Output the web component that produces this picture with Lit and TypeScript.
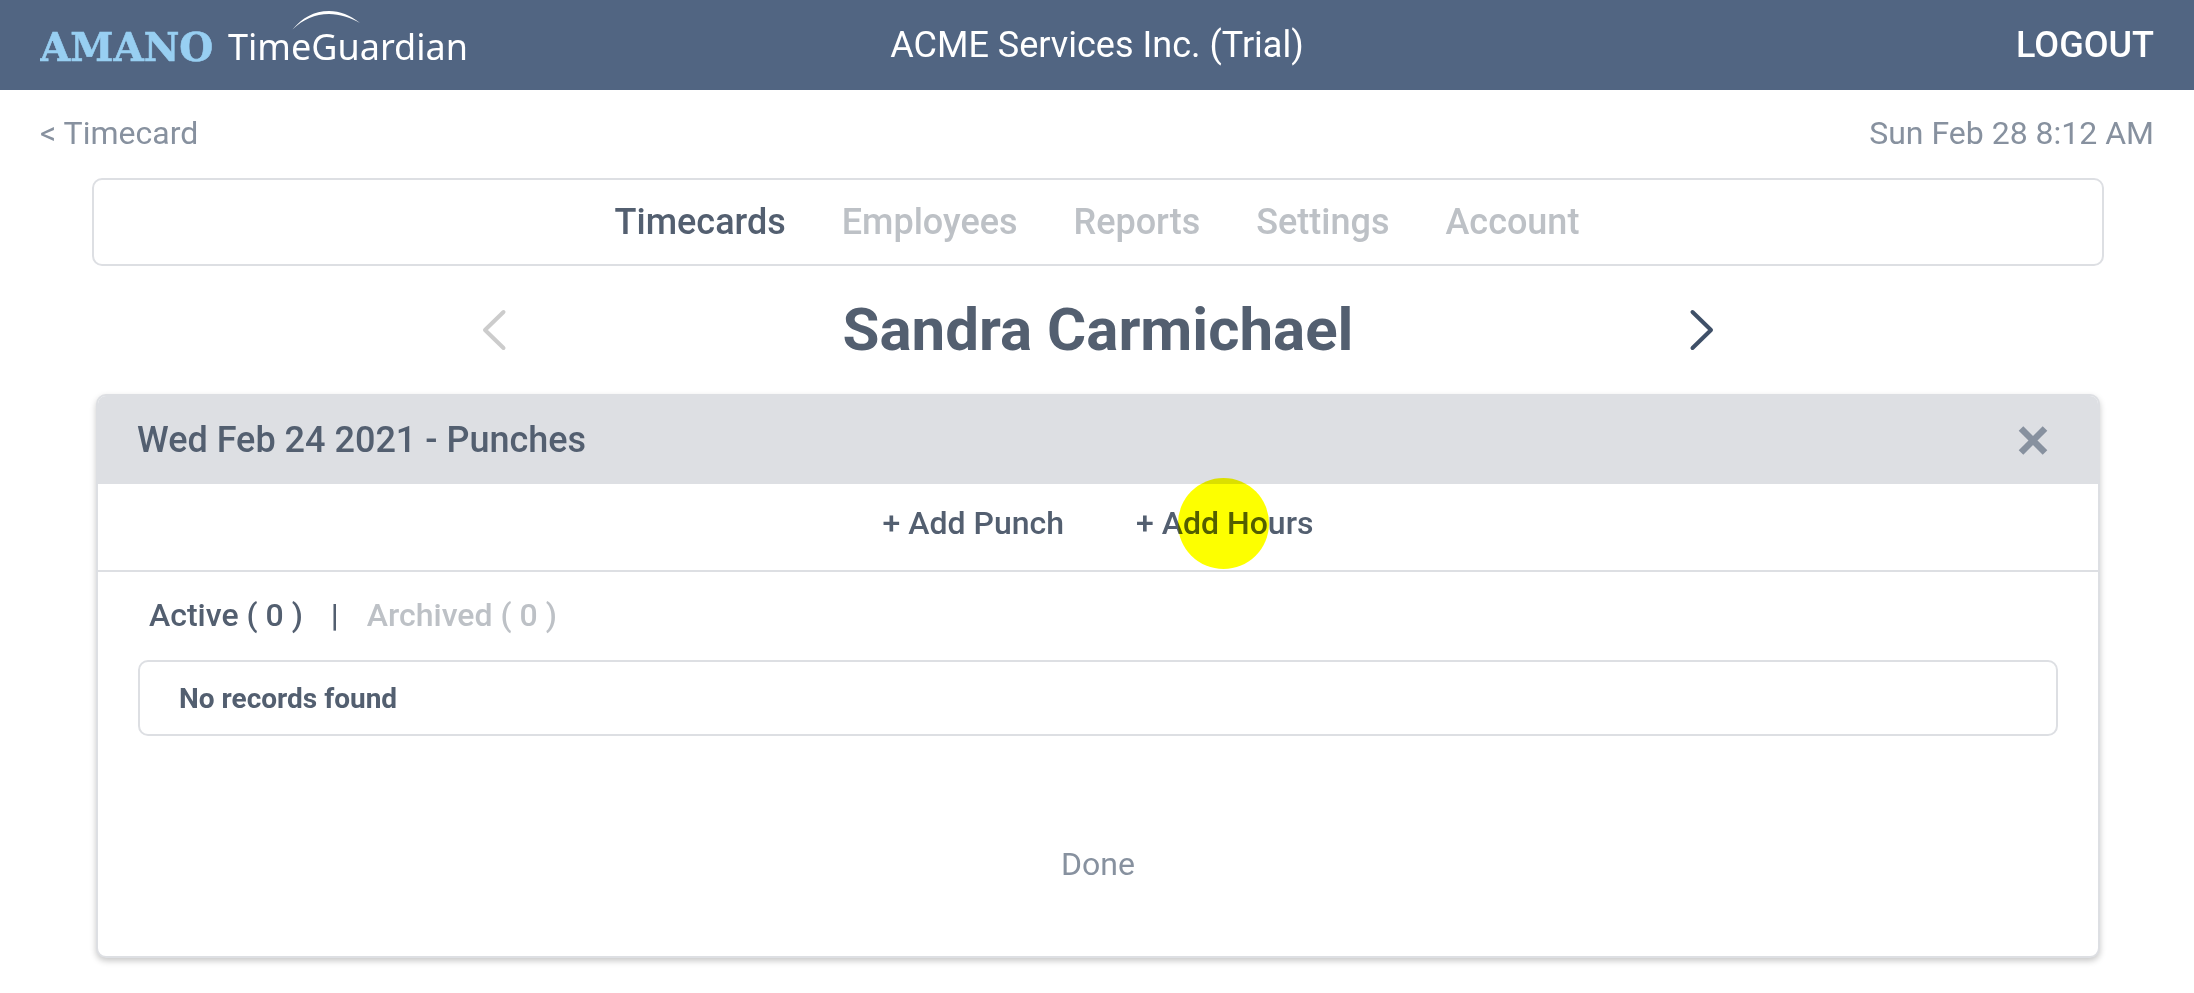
import { LitElement, html, css } from "lit";
import { customElement, property, state } from "lit/decorators.js";
import { classMap } from "lit/directives/class-map.js";

@customElement("brand-logo")
class BrandLogo extends LitElement {
  static styles = css`
    :host {
      display: block;
    }
    .logo {
      display: block;
      width: 440px;
      height: 90px;
    }
    .maker {
      font: bold 39px "DejaVu Serif", serif;
      fill: #98cff2;
      stroke: #98cff2;
      stroke-width: 0.6;
    }
    .product {
      font: 36px "Noto Sans", sans-serif;
      fill: #fff;
    }
    .arc {
      fill: #fff;
    }
  `;

  render() {
    return html`
      <svg class="logo" viewBox="0 0 440 90" role="img" aria-label="Amano TimeGuardian">
        <text class="maker" x="0" y="61">AMANO</text>
        <text class="product" x="188" y="60">TimeGuardian</text>
        <path
          class="arc"
          d="M252.500 29.500C262 18 274 11 289 11C300 11 310 15 320 23C310 17.500 300 14 289 14C275 14 263 19.500 252.500 29.500Z"
        />
      </svg>
    `;
  }
}

@customElement("punch-card")
class PunchCard extends LitElement {
  @property() heading = "";
  @state() private tab = "active";

  static styles = css`
    :host {
      display: block;
      box-sizing: border-box;
      border: 2px solid #dddfe3;
      border-radius: 10px;
      box-shadow: 0 3px 6px rgba(0, 0, 0, 0.22);
      background: #fff;
      color: #535f70;
    }
    button {
      padding: 0;
      border: 0;
      background: none;
      color: inherit;
      font: inherit;
      cursor: pointer;
    }
    .head {
      display: flex;
      align-items: center;
      justify-content: space-between;
      height: 88px;
      padding: 0 49px 0 39px;
      background: #dddfe3;
      border-radius: 8px 8px 0 0;
    }
    .title {
      margin: 0;
      font-size: 36px;
      font-weight: 500;
    }
    .close,
    .cross {
      display: block;
    }
    .actions {
      display: flex;
      justify-content: center;
      gap: 72px;
      padding-bottom: 8px;
      border-bottom: 2px solid #dddfe3;
      font-size: 32px;
      font-weight: 500;
      line-height: 78px;
    }
    .spot {
      position: relative;
    }
    .spot::after {
      content: "";
      position: absolute;
      left: 42px;
      top: -6px;
      width: 91px;
      height: 91px;
      border-radius: 50%;
      background: #fdff00;
      mix-blend-mode: multiply;
      pointer-events: none;
    }
    .tabs {
      display: flex;
      gap: 28px;
      padding: 0 51px 2px;
      font-size: 32px;
      font-weight: 500;
      line-height: 86px;
    }
    .tab {
      color: #bdc1c6;
    }
    .tab.on {
      color: inherit;
    }
    .records {
      margin: 0 40px;
      padding: 2px 39px 0;
      border: 2px solid #dddfe3;
      border-radius: 10px;
      font-size: 28px;
      font-weight: 700;
      line-height: 70px;
    }
    .foot {
      display: flex;
      justify-content: center;
      padding: 108px 0 72px;
      color: #87919f;
      font-size: 32px;
      line-height: 40px;
    }
  `;

  private renderTab(id: string, label: string) {
    return html`<button
      class=${classMap({ tab: true, on: this.tab === id })}
      @click=${() => (this.tab = id)}
    >${label} ( 0 )</button>`;
  }

  render() {
    return html`
      <header class="head">
        <h2 class="title">${this.heading}</h2>
        <button class="close" aria-label="Close">
          <svg class="cross" width="32" height="32" viewBox="0 0 32 32">
            <path d="M4 4.500L28 28.500M28 4.500L4 28.500" stroke="#87919f" stroke-width="6.500" />
          </svg>
        </button>
      </header>
      <div class="actions">
        <button>+ Add Punch</button>
        <button class="spot">+ Add Hours</button>
      </div>
      <div class="tabs">
        ${this.renderTab("active", "Active")}
        <span>|</span>
        ${this.renderTab("archived", "Archived")}
      </div>
      <div class="records">No records found</div>
      <div class="foot"><button>Done</button></div>
    `;
  }
}

@customElement("app-root")
class AppRoot extends LitElement {
  @state() private section = "Timecards";

  static styles = css`
    :host {
      display: block;
      min-height: 100vh;
      background: #fff;
      color: #535f70;
      font-family: Roboto, sans-serif;
    }
    a {
      color: inherit;
      text-decoration: none;
    }
    button {
      padding: 0;
      border: 0;
      background: none;
      font: inherit;
      cursor: pointer;
    }
    .bar {
      display: grid;
      grid-template-columns: 1fr auto 1fr;
      align-items: center;
      height: 90px;
      padding: 0 40px;
      background: #516582;
      color: #fff;
      font-size: 36px;
    }
    .logout {
      justify-self: end;
      color: #fff;
      font-weight: 500;
    }
    .sub {
      display: flex;
      justify-content: space-between;
      padding: 0 40px 2px;
      color: #87919f;
      font-size: 32px;
      line-height: 86px;
    }
    .main {
      padding: 0 90px 0 92px;
    }
    .nav {
      display: flex;
      justify-content: center;
      gap: 56px;
      padding-right: 2px;
      border: 2px solid #dddfe3;
      border-radius: 10px;
      font-size: 36px;
      font-weight: 500;
      line-height: 84px;
    }
    .link {
      color: #bdc1c6;
    }
    .link.on {
      color: inherit;
    }
    .person {
      display: flex;
      align-items: center;
      justify-content: space-between;
      box-sizing: border-box;
      width: 62%;
      height: 128px;
      margin: 0 auto;
      padding: 0 6px;
    }
    .name {
      margin: 0;
      font-size: 60px;
      font-weight: 700;
      line-height: 68px;
    }
    .chevron {
      display: block;
      fill: none;
      stroke: #3f5068;
      stroke-width: 4;
      stroke-linecap: round;
      stroke-linejoin: round;
    }
    .chevron.off {
      stroke: #cccccc;
    }
    .card {
      margin: 0 4px;
    }
  `;

  render() {
    const sections = ["Timecards", "Employees", "Reports", "Settings", "Account"];
    return html`
      <header class="bar">
        <brand-logo></brand-logo>
        <span>ACME Services Inc. (Trial)</span>
        <button class="logout">LOGOUT</button>
      </header>
      <div class="sub">
        <a href="#timecard">&lt; Timecard</a>
        <span>Sun Feb 28 8:12 AM</span>
      </div>
      <main class="main">
        <nav class="nav">
          ${sections.map(
            (name) => html`<a
              class=${classMap({ link: true, on: this.section === name })}
              href="#${name.toLowerCase()}"
              @click=${() => (this.section = name)}
            >${name}</a>`
          )}
        </nav>
        <div class="person">
          <button aria-label="Previous employee">
            <svg class="chevron off" width="28" height="44" viewBox="0 0 28 44">
              <path d="M23.500 4L5 22L23.500 40" />
            </svg>
          </button>
          <h1 class="name">Sandra Carmichael</h1>
          <button aria-label="Next employee">
            <svg class="chevron" width="28" height="44" viewBox="0 0 28 44">
              <path d="M4.500 4L23 22L4.500 40" />
            </svg>
          </button>
        </div>
        <punch-card class="card" heading="Wed Feb 24 2021 - Punches"></punch-card>
      </main>
    `;
  }
}
